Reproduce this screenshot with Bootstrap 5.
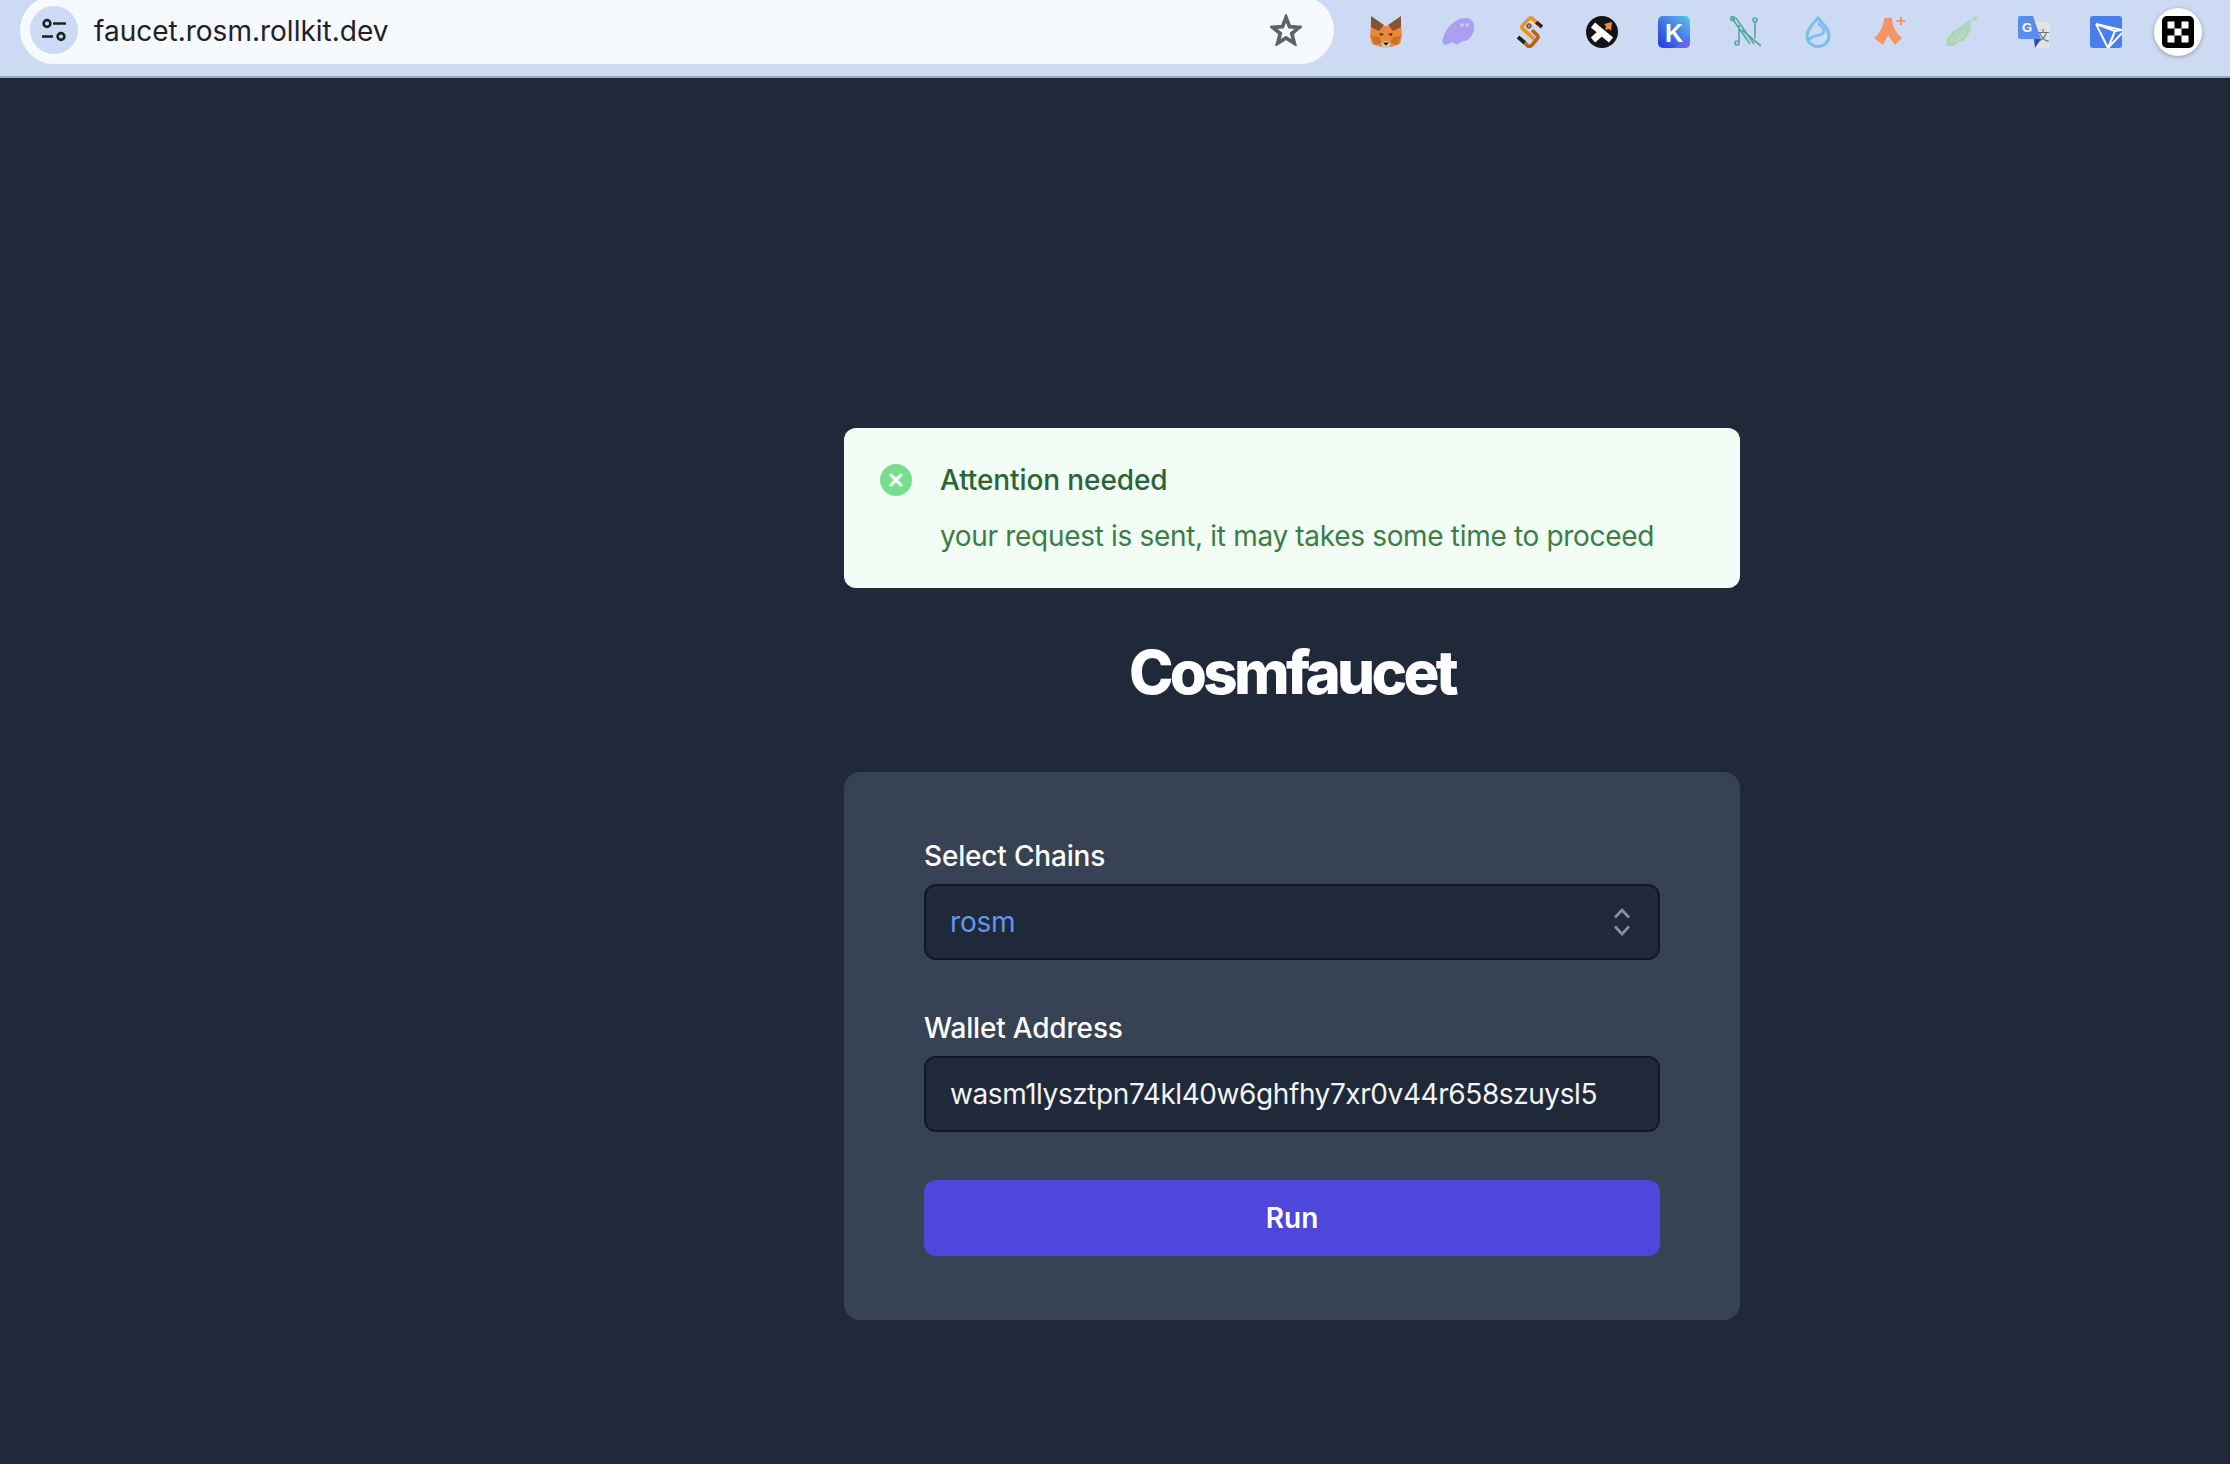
<!DOCTYPE html>
<html lang="en">
<head>
<meta charset="utf-8">
<title>Cosmfaucet</title>
<link href="https://cdn.jsdelivr.net/npm/bootstrap@5.3.0/dist/css/bootstrap.min.css" rel="stylesheet">
<style>
body{background:#202939;font-family:Inter,"Liberation Sans",sans-serif;min-height:1464px;color:#fff}
.chrome-bar{height:78px;background:#ccdaf4;border-bottom:2px solid #9ba6bc;overflow:hidden}
.url-pill{width:1314px;height:68px;margin-left:20px;margin-top:-4px;border-radius:34px;background:#f6f9fe;padding-left:10px}
.site-info{width:48px;height:48px;background:#cddaf3;border-radius:50%;margin-right:16px}
.url-text{font-size:28px;line-height:36px;padding-top:2px;color:#1f2125;flex:1 1 auto}
.star-icon{width:32px;height:32px;margin-right:32px}
.ext-row{margin-left:36px;gap:40px}
.ext-icon{width:32px;height:32px;display:block;flex:none}
.okx-wrap{width:32px;height:32px;position:relative}
.okx-wrap::before{content:"";position:absolute;left:-8px;top:-8px;width:48px;height:48px;border-radius:50%;background:#fff;box-shadow:0 1px 4px rgba(0,0,0,.3)}
.okx-wrap svg{position:relative}
.page-col{width:896px;margin-left:844px;padding-top:350px}
.notice{background:#f1fdf5;border:0;border-radius:12px;padding:32px;margin:0;height:160px}
.notice-icon{width:40px;height:40px;flex:none;margin-right:24px}
.notice-title{font-size:28px;line-height:40px;font-weight:500;letter-spacing:-.1px;color:#2b6436;margin:0}
.notice-text{font-size:28px;line-height:40px;letter-spacing:-.32px;color:#3a7d46;margin:16px 0 0}
.app-title{font-size:60px;line-height:72px;font-weight:800;letter-spacing:-3.7px;color:#fff;text-align:center;margin:48px 0 64px}
.form-panel{background:#374255;border:0;border-radius:16px;padding:64px 80px;color:#fff}
.field-gap{margin-bottom:48px}
.field-label{display:block;font-size:28px;line-height:40px;font-weight:500;letter-spacing:-.18px;color:#fff;margin-bottom:8px}
.field-input,.field-input:focus{height:76px;font-size:28px;line-height:40px;letter-spacing:-.42px;padding:0 24px;background-color:#202939;border:2px solid #111827;border-radius:12px;color:#f3f4f6;box-shadow:none}
.field-pick,.field-pick:focus{height:76px;font-size:28px;line-height:40px;letter-spacing:-.2px;padding:0 24px;background-color:#202939;border:2px solid #111827;border-radius:12px;color:#6096ee;box-shadow:none;background-image:url("data:image/svg+xml,%3Csvg xmlns='http://www.w3.org/2000/svg' viewBox='0 0 16 28' fill='none' stroke='%238b909c' stroke-width='2.6'%3E%3Cpath d='M1 9.5 8 2l7 7.5M1 18.5 8 26l7-7.5'/%3E%3C/svg%3E");background-size:16px 28px;background-position:right 28px center;background-repeat:no-repeat}
.run-btn,.run-btn:hover{height:76px;background:#4f46dc;border:0;border-radius:12px;color:#fff;font-size:28px;font-weight:600;padding:0}
</style>
</head>
<body class="m-0">
<header class="chrome-bar d-flex align-items-start">
  <div class="url-pill d-flex align-items-center">
    <div class="site-info d-flex align-items-center justify-content-center">
      <svg width="48" height="48" viewBox="0 0 48 48" fill="none" stroke="#202124" stroke-width="2.6"><circle cx="17" cy="17.5" r="3.4"/><path d="M23 17.5h13M12 30.5h11"/><circle cx="31" cy="30.5" r="3.4"/></svg>
    </div>
    <span class="url-text">faucet.rosm.rollkit.dev</span>
    <svg class="star-icon" viewBox="0 0 36 36" fill="none" stroke="#5f6368" stroke-width="4.2"><path d="M18 4l4 10.2 11 .8-8.5 7 2.8 10.800L18 27l-9.300 5.800 2.800-10.800L3 15l11-.8z"/></svg>
  </div>
  <div class="ext-row d-flex align-items-center mt-3">
    <svg class="ext-icon" viewBox="0 0 32 32"><path fill="#ea883a" d="M1 9l8 4 4-3h6l4 3 8-4 1 11-2 8-9 3H11l-9-3-2-8z"/><path fill="#8b5230" d="M1 0l13 9-5 6-8-4zM31 0L18 9l5 6 8-4z"/><path fill="#c86f2c" d="M1 20l8 1 3 6-7 2zM31 20l-8 1-3 6 7 2z"/><path fill="#3a2a20" d="M9 17l5 1-3 2zM23 17l-5 1 3 2z"/><path fill="#d9c3ac" d="M11 27l3-2h4l3 2-2 5h-6z"/><path fill="#1d1d1d" d="M13 26.500h6l-3 3z"/></svg>
    <svg class="ext-icon" viewBox="0 0 32 32"><path fill="#ab9ff2" d="M32 11C32 4 28 2 23 2 13 2 4 12 1 22c-2 5 1 8 5 6 2-1 3-2 5-2 2 3 5 3 7 1 2-2 3-2 5-2 5-1 9-7 9-14z"/><circle cx="20" cy="9" r="1.700" fill="#d3ccf9"/><circle cx="25" cy="9" r="1.700" fill="#d3ccf9"/></svg>
    <svg class="ext-icon" viewBox="0 0 32 32" fill="none" stroke-width="3.800"><path stroke="#3c2412" d="M28 11l-6-5"/><path stroke="#e8952c" d="M22 6l-3-3q-2-2-4 0L9 9q-2 2 0 4l11 10"/><path stroke="#2e1c0e" d="M4 21l7 6"/><path stroke="#b7651e" d="M11 27l3 3q2 1 4-1l5-6q2-2 0-4L18 14"/><circle cx="15" cy="10" r="2.200" fill="#e8822c" stroke="#4a2c14" stroke-width="1"/></svg>
    <svg class="ext-icon" viewBox="0 0 32 32"><circle cx="16" cy="16" r="16" fill="#141414"/><path stroke="#fff" stroke-width="6.500" d="M7 9l18 15M7 24l10-9"/><path fill="#ef8a3a" d="M26 6l-1 9-2-2-4 1 1-4-2-2z"/></svg>
    <svg class="ext-icon" viewBox="0 0 32 32"><defs><linearGradient id="kg" x1="0" y1="1" x2="1" y2="0"><stop offset="0" stop-color="#2438e0"/><stop offset=".55" stop-color="#4a7fe6"/><stop offset="1" stop-color="#56c9ea"/></linearGradient></defs><rect width="32" height="32" rx="5" fill="url(#kg)"/><path fill="#7a5ff0" opacity=".7" d="M16 32l16-12v7q0 5-5 5z"/><text x="16" y="26" text-anchor="middle" font-family="Liberation Sans" font-weight="700" font-size="25" fill="#fff">K</text></svg>
    <svg class="ext-icon" viewBox="0 0 32 32" fill="none" stroke="#5aa9a8" stroke-width="1.700"><path d="M2 2l18 26M6 2l18 26M9 9v17M25 5v17M2 2h4M12 14l19 16"/><circle cx="2.500" cy="2.500" r="2"/><circle cx="7" cy="27" r="2"/><circle cx="25" cy="4" r="2"/></svg>
    <svg class="ext-icon" viewBox="0 0 32 32" fill="none" stroke="#7cbdee" stroke-width="3"><path d="M16 2c5 6 11 11 11 18a11 10.500 0 0 1-22 0C5 13 11 8 16 2z"/><path stroke-width="2.500" d="M7 24c3-6 15-3 15-9 0-2-3-5-6-8"/></svg>
    <svg class="ext-icon" viewBox="0 0 32 32" fill="#f59468"><path d="M10 2h8c0 8 4 15 10 20l-7 7-7-10-5 10-9-7c6-5 10-12 10-20z"/><path d="M26 1h2v3h3.500v2H28v3h-2V6h-3.500V4H26z"/></svg>
    <svg class="ext-icon" viewBox="0 0 32 32"><path fill="#aed4ba" d="M0 30l1-8 5-6 5-3 4-3 4-3 5-4 1 11-4 6-3 5-5 1-5 4z"/><path stroke="#c8e3d0" stroke-width="1.200" stroke-dasharray="2 2" fill="none" d="M5 24l8-8M9 25l9-10M13 24l8-9"/><path stroke="#aed4ba" stroke-width="1.200" d="M24 6l5-4"/><circle cx="29" cy="2.500" r="2.300" fill="#aed4ba"/></svg>
    <svg class="ext-icon" viewBox="0 0 32 32"><rect x="16" y="6" width="16" height="26" rx="2" fill="#e2e3e3"/><text x="25" y="24" text-anchor="middle" font-family="Noto Sans CJK SC" font-size="13" fill="#6a7278">文</text><path fill="#5b8def" d="M2 0h13l8 23H2q-2 0-2-2V2q0-2 2-2z"/><path fill="#3b45b8" d="M16 23h7l-6 9z"/><text x="9" y="16" text-anchor="middle" font-family="Liberation Sans" font-weight="700" font-size="13" fill="#fff">G</text></svg>
    <svg class="ext-icon" viewBox="0 0 32 32"><rect width="32" height="32" rx="3" fill="#4a7eec"/><path fill="none" stroke="#fff" stroke-width="2" d="M6 8l26 6M6 8l12 24L32 17M6 8l19 7-7 17M25 15l7-1"/></svg>
    <div class="okx-wrap"><svg class="ext-icon" viewBox="0 0 32 32"><rect width="32" height="32" rx="5" fill="#000"/><path fill="#fff" d="M5.500 5.500h7v7h-7zM19.500 5.500h7v7h-7zM12.500 12.500h7v7h-7zM5.500 19.500h7v7h-7zM19.500 19.500h7v7h-7z"/></svg></div>
  </div>
</header>
<main class="page-col">
  <div class="alert notice d-flex" role="alert">
    <svg class="notice-icon" viewBox="0 0 20 20"><circle cx="10" cy="10" r="8" fill="#77dd8e"/><path stroke="#f0fdf4" stroke-width="1.600" stroke-linecap="round" d="M7.500 7.500l5 5M12.500 7.500l-5 5"/></svg>
    <div>
      <h3 class="notice-title">Attention needed</h3>
      <p class="notice-text">your request is sent, it may takes some time to proceed</p>
    </div>
  </div>
  <h1 class="app-title">Cosmfaucet</h1>
  <form class="card form-panel">
    <div class="field-gap">
      <label class="field-label" for="chain">Select Chains</label>
      <select id="chain" class="form-select field-pick"><option>rosm</option></select>
    </div>
    <div class="field-gap">
      <label class="field-label" for="addr">Wallet Address</label>
      <input id="addr" class="form-control field-input" type="text" value="wasm1lysztpn74kl40w6ghfhy7xr0v44r658szuysl5">
    </div>
    <button type="button" class="btn run-btn w-100">Run</button>
  </form>
</main>
<script src="https://cdn.jsdelivr.net/npm/bootstrap@5.3.0/dist/js/bootstrap.bundle.min.js"></script>
</body>
</html>
